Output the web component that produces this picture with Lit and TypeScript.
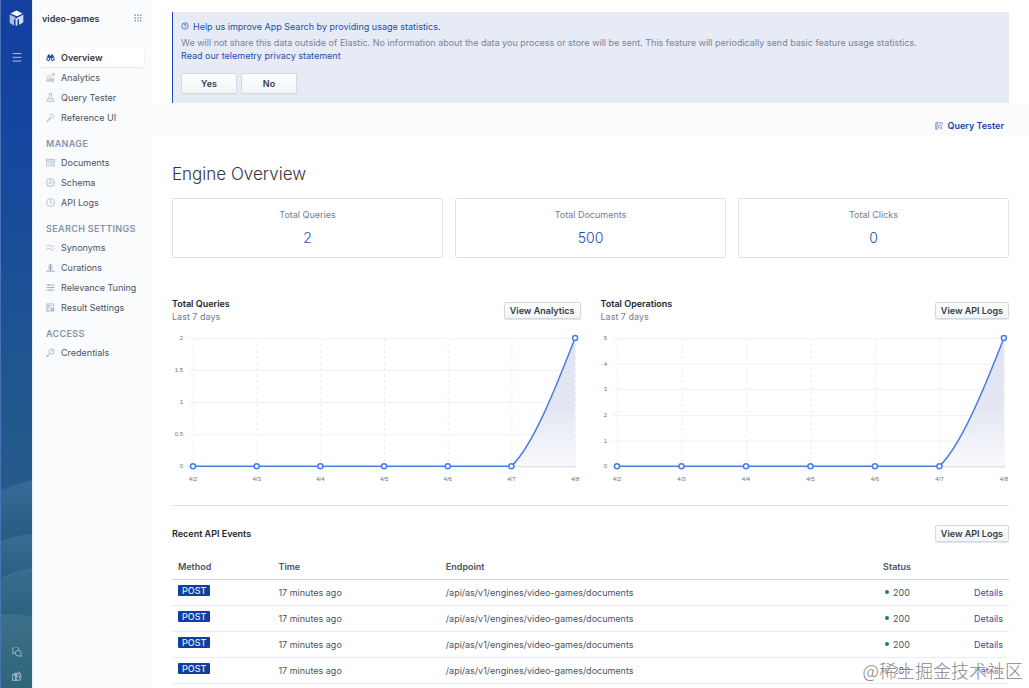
import { LitElement, html, css, svg } from "lit";
import type { SVGTemplateResult } from "lit";
import { customElement, property } from "lit/decorators.js";
import { classMap } from "lit/directives/class-map.js";

const icons: Record<string, SVGTemplateResult> = {
  overview: svg`<g fill="currentColor" stroke="none"><path d="M3.6 2.6h2.6l.9 1.6v4L5.4 8C4 7.400 2.600 7.600 1.500 8.400z"/><path d="M12.400 2.600H9.800l-.9 1.600v4L10.600 8c1.400-.6 2.800-.4 3.900.4z"/><rect x="7" y="5" width="2" height="4"/></g><circle cx="4" cy="10.600" r="2.600" fill="none" stroke-width="1.800"/><circle cx="12" cy="10.600" r="2.600" fill="none" stroke-width="1.800"/>`,
  analytics: svg`<path d="M1 8.500 5 4.500l3 2.500L14 1.500M10.500 1.500H14.500V5.500M1.500 15.500v-4h2v4M5.500 15.500v-6h2v6M9.500 15.500v-5h2v5M13.500 15.500V8"/>`,
  flask: svg`<path d="M5 1h6M6.200 1v5.500L1.800 13.400Q1.200 15 2.800 15h10.400q1.600 0 1-1.600L9.800 6.500V1M4 10.800h8"/>`,
  wand: svg`<path d="M1 14.600 9 6.600l1.200 1.200-8 8zM10 1v3M15 6h-3M14.500 1.500l-2 2M6 2.500l1.600 1.600M13.500 10.500l-1.600-1.600"/>`,
  documents: svg`<path d="M.7 2.500h14.600v11.500H.7zM.7 5.300h14.600M3 8h2M3 11h2M7 8h6M7 11h6"/>`,
  gear: svg`<circle cx="8" cy="8" r="2.300"/><path d="M6.700 1h2.600l.5 2 1.300.6 1.900-1 1.400 1.400-1 1.900.6 1.300 2 .5v1.600l-2 .5-.6 1.300 1 1.900-1.400 1.400-1.900-1-1.300.6-.5 2H6.700l-.5-2-1.300-.6-1.900 1L1.600 13l1-1.900L2 9.800l-1.500-.5V6.700L2 6.200l.6-1.300-1-1.900L3 1.600l1.900 1L6.200 3z"/>`,
  clock: svg`<circle cx="8" cy="8" r="7"/><path d="M8 3.500V8l3.300 1.800"/>`,
  waves: svg`<path d="M1 6.500C3 2.500 5.500 3 8 5s4.500 2 7-1.500M1 12.500c2-4 4.500-3.500 7-1.500s4.500 2 7-1.500"/>`,
  curations: svg`<path d="M8 14.500V2M5.500 4.200 8 1.500l2.500 2.700M4 7h8M4 10.700h8M.5 14.500h15" stroke-width="1.400"/>`,
  sliders: svg`<path d="M1 3.500h14M1 8h14M1 12.500h14M5 2v3M11 6.500v3M7 11v3" stroke-width="1.300"/>`,
  settings: svg`<path d="M7.500 14.500H1.500V1.500h12V7M4 4.500h7M4 7.500h4M3.500 1.500v13"/><circle cx="11.500" cy="11.500" r="2.600" stroke-width="2"/>`,
  key: svg`<circle cx="10" cy="6" r="4.600"/><circle cx="11" cy="5" r="1"/><path d="M6.700 9.300 1.400 14.600M1.200 12.500v2.300h2.500v-2h2"/>`,
  help: svg`<circle cx="8" cy="8" r="6.400" stroke-width="1.300"/><path d="M5.700 6.600Q5.900 4.400 8 4.400t2.300 1.900Q10.300 7.500 8 8.500v1.300M8 11v1.400" stroke-width="1.300"/>`,
  inspect: svg`<path d="M14.500 5V1.500H1.500v13H5M4 1.500v13" stroke-width="1"/><circle cx="9.800" cy="9" r="3.300"/><path d="m12.200 11.500 3 3.500"/>`,
  grid: svg`<g fill="currentColor" stroke="none">${[1, 6.500, 12].map((y) => [1, 6.500, 12].map((x) => svg`<rect x=${x} y=${y} width="3" height="3"/>`))}</g>`,
  menu: svg`<path d="M1 2.500h14M1 8.500h14M1 14.500h14" stroke-width="1.500"/>`,
  chat: svg`<path d="M4.300 9.500 1 10.500l1-3A5 5 0 1 1 11 4.200" stroke-width="1.300"/><path d="M14 12.200 15 15l-3.200-.9A4.600 4.600 0 1 1 14 12.200z" stroke-width="1.300"/>`,
  gift: svg`<path d="M1 6v9h8M1 6l4.500-2.500V15M1 6h4.500" stroke-width="1.300"/><path d="M7 4.500 10.500 1 14 4.500V12q0 3-3.500 3T7 12zM7 8h3.500a1.700 1.700 0 0 1 0 3.400M7 4.500h7" stroke-width="1.300"/>`,
};

const icon = (name: string) =>
  html`<svg class="icon" viewBox="0 0 16 16" aria-hidden="true" fill="none" stroke="currentColor" stroke-width="1">${icons[name]}</svg>`;

@customElement("line-chart")
class LineChart extends LitElement {
  @property({ attribute: false }) ticks: string[] = [];
  @property({ type: Number }) start = 21;
  @property({ type: Number }) step = 64;
  @property() name = "";

  static styles = css`
    :host { display: block; }
    .chart { display: block; width: 100%; overflow: visible; }
    .label { font: 6px "Liberation Sans", Arial, sans-serif; fill: #69707d; }
    .grid { stroke: #f2f3f5; stroke-width: 1; }
    .guide { stroke: #ebecf0; stroke-width: 1; stroke-dasharray: 3 3; }
    .axis { stroke: #d9dbdf; stroke-width: 1; }
    .line { fill: none; stroke: #4c7de0; stroke-width: 1.5; }
    .dot { fill: #fff; stroke: #4c7de0; stroke-width: 1.5; }
  `;

  render() {
    const top = 8;
    const base = 136;
    const days = ["4/2", "4/3", "4/4", "4/5", "4/6", "4/7", "4/8"];
    const xs = days.map((_, i) => this.start + i * this.step);
    const end = xs[6];
    const from = xs[5];
    const rise = `M${from} ${base}C${from + 21} ${base - 20} ${end - 21} ${base - 74} ${end} ${top}`;
    return html`<svg class="chart" viewBox="0 0 408 155" role="img" aria-label=${this.name}>
      <defs>
        <linearGradient id="fill" x1="0" y1="0" x2="0" y2="1">
          <stop offset="0" stop-color="#dfe3f2" />
          <stop offset="0.55" stop-color="#e4e7f3" />
          <stop offset="1" stop-color="#f9f9fc" />
        </linearGradient>
      </defs>
      ${this.ticks.map((t, i) => {
        const y = base - (i * (base - top)) / (this.ticks.length - 1);
        return svg`<line class="grid" x1=${this.start - 5} x2=${end} y1=${y + 0.5} y2=${y + 0.5} />
          <text class="label" x=${this.start - 10} y=${y + 2} text-anchor="end">${t}</text>`;
      })}
      ${xs.map(
        (x, i) => svg`<line class="guide" x1=${x + 0.5} x2=${x + 0.5} y1=${top} y2=${base} />
          <text class="label" x=${x} y="151" text-anchor="middle">${days[i]}</text>`,
      )}
      <path d="${rise}V${base}Z" fill="url(#fill)" />
      <line class="axis" x1=${this.start - 5} x2=${end + 1} y1=${base + 0.5} y2=${base + 0.5} />
      <path class="line" d="M${xs[0]} ${base}H${from} ${rise}" />
      ${xs.map((x, i) => svg`<circle class="dot" cx=${x} cy=${i === 6 ? top : base} r="2.500" />`)}
    </svg>`;
  }
}

interface NavGroup {
  title?: string;
  items: [string, string][];
}

const nav: NavGroup[] = [
  { items: [["overview", "Overview"], ["analytics", "Analytics"], ["flask", "Query Tester"], ["wand", "Reference UI"]] },
  { title: "MANAGE", items: [["documents", "Documents"], ["gear", "Schema"], ["clock", "API Logs"]] },
  {
    title: "SEARCH SETTINGS",
    items: [["waves", "Synonyms"], ["curations", "Curations"], ["sliders", "Relevance Tuning"], ["settings", "Result Settings"]],
  },
  { title: "ACCESS", items: [["key", "Credentials"]] },
];

const stats = [["Total Queries", "2"], ["Total Documents", "500"], ["Total Clicks", "0"]];

const events = Array.from({ length: 4 }, () => ({
  method: "POST",
  time: "17 minutes ago",
  endpoint: "/api/as/v1/engines/video-games/documents",
  status: 200,
}));

@customElement("app-root")
class AppRoot extends LitElement {
  static styles = css`
    :host {
      display: grid;
      grid-template-columns: 32px 120px minmax(0, 1fr);
      min-height: 100vh;
      position: relative;
      background: #fff;
      color: #4b535f;
      font: 9px/13px Inter, sans-serif;
    }
    * { box-sizing: border-box; }
    h1, h2, p, ul { margin: 0; padding: 0; }
    a { color: #1d4db0; text-decoration: none; }
    button { font: 600 9px/13px Inter, sans-serif; color: #343c47; cursor: pointer; }
    .icon { display: block; width: 9px; height: 9px; flex: none; }
    .rail {
      position: relative;
      display: flex;
      flex-direction: column;
      align-items: center;
      padding: 9px 0 7px;
      border-left: 1px solid #4a72b4;
      background: linear-gradient(#133f9f 0, #1646a0 20%, #205590 54%, #275d88 75%, #2d6679 100%);
    }
    .waves { position: absolute; left: 0; bottom: 0; width: 100%; height: 210px; }
    .rail-btn { position: relative; display: block; padding: 0; border: 0; background: none; color: #b9cbe8; }
    .rail-btn .icon { width: 10px; height: 10px; }
    .logo { display: block; width: 15px; height: 18px; }
    .toggle { margin-top: 25px; }
    .foot { margin-top: auto; display: grid; gap: 14px; }
    .foot .rail-btn { color: #b5ced6; }
    .side { background: #f9fbfd; border-left: 1px solid #e4eef2; padding: 11px 8px 0 7px; }
    .engine { display: flex; align-items: center; justify-content: space-between; padding: 0 2px; height: 14px; margin-bottom: 22px; color: #343741; font-weight: 600; }
    .engine .rail-btn { color: #8d99ae; }
    .engine .icon { width: 8px; height: 8px; }
    .list { list-style: none; }
    .item { display: flex; align-items: center; gap: 6px; height: 20px; padding: 0 6px; border-radius: 2px; color: #4b535f; white-space: nowrap; }
    .item .icon { color: #8b9ab3; }
    .item.active { background: #fff; color: #343741; font-weight: 600; box-shadow: 0 1px 2px #dfe4ec; }
    .item.active .icon { color: #1846a8; }
    .group { padding: 11px 6px 2px; font-size: 9px; line-height: 12px; font-weight: 600; letter-spacing: 0.04em; color: #8494ab; white-space: nowrap; }
    .callout { margin: 12px 20px 0; padding: 7px 8px 9px; border-left: 1px solid #1d4db0; background: #e7ebf5; color: #7b8494; }
    .callout-title { display: flex; align-items: center; gap: 4px; height: 14px; margin-bottom: 3px; font-size: 9px; font-weight: 400; color: #1d4db0; }
    .callout-title .icon { width: 8px; height: 8px; }
    .link { display: block; width: max-content; }
    .actions { display: flex; gap: 4px; margin-top: 11px; }
    .actions .btn { width: 56px; height: 21px; }
    .btn { height: 17px; padding: 0 5px; border: 1px solid #d3d9df; border-radius: 2px; background: linear-gradient(#fdfefe, #f2f5f7); box-shadow: 0 1px 1px #dfe3e8; line-height: 13px; white-space: nowrap; }
    .bar { display: flex; justify-content: flex-end; align-items: center; height: 34px; padding: 11px 25px 0 0; background: #fcfcfd; }
    .tester { display: flex; align-items: center; gap: 4px; font-weight: 600; height: 20px; color: #1846a8; }
    .tester .icon { width: 8px; height: 8px; }
    .content { padding: 23px 20px 4px; }
    .title { font-size: 17px; line-height: 28px; font-weight: 300; color: #343741; }
    .stats { display: grid; grid-template-columns: repeat(3, 1fr); gap: 12px; margin-top: 10px; }
    .stat { display: grid; gap: 8px; height: 60px; padding-top: 9px; border: 1px solid #dde3ee; border-radius: 2px; text-align: center; color: #747e8e; align-content: start; }
    .num { font-size: 14px; line-height: 18px; color: #1d4db0; font-weight: 300; }
    .charts { display: grid; grid-template-columns: 1fr 1fr; gap: 20px; margin-top: 39px; padding-bottom: 20px; border-bottom: 1px solid #dfe2ea; }
    .head { display: flex; justify-content: space-between; align-items: center; }
    .charts .head { height: 26px; margin-bottom: 7px; }
    .h2 { font-size: 9px; line-height: 13px; font-weight: 600; color: #23272f; }
    .sub { color: #747e8e; }
    .recent { padding-top: 18px; }
    .recent .head { height: 18px; margin-bottom: 13px; }
    .table { width: 100%; table-layout: fixed; border-collapse: collapse; text-align: left; }
    .table th { height: 24px; padding: 0 6px; font-weight: 600; color: #4b535f; border-bottom: 1px solid #ccd5e0; }
    .table td { height: 26px; padding: 0 6px; border-bottom: 1px solid #e9ecf2; }
    .c-method { width: 12%; }
    .c-time { width: 20%; }
    .c-endpoint { width: 52%; }
    .table .right { text-align: right; }
    .badge { display: block; width: max-content; margin-bottom: 4px; padding: 0 4px; border-radius: 1px; background: #123f9f; color: #dfe8fb; font-weight: 500; line-height: 11px; }
    .status { display: flex; align-items: center; gap: 4px; padding-left: 2px; }
    .status::before { content: ""; width: 4px; height: 4px; border-radius: 50%; background: #27804b; }
    .table .c-status { padding-left: 8px; }
    .mark { position: absolute; right: 6px; bottom: 6px; font: 300 18px/24px "Noto Sans CJK SC", sans-serif; color: #85878c; text-shadow: 1px 0 #fff, -1px 0 #fff, 0 1px #fff; pointer-events: none; white-space: nowrap; }
  `;

  render() {
    return html`
      <header class="rail">
        <svg class="waves" viewBox="0 0 32 210" preserveAspectRatio="none" aria-hidden="true">
          <defs>
            <linearGradient id="w" x1="0" y1="0" x2="0" y2="1">
              <stop offset="0" stop-color="#fff" stop-opacity="0.09" />
              <stop offset="1" stop-color="#fff" stop-opacity="0" />
            </linearGradient>
          </defs>
          <path fill="url(#w)" d="M0 12Q16 6 32 2v52H0z" />
          <path fill="url(#w)" d="M0 63Q16 57 32 56v40H0z" />
          <path fill="url(#w)" d="M0 100Q16 92 32 90v48H0z" />
          <path fill="url(#w)" d="M0 136Q16 136 32 138v72H0z" />
        </svg>
        <a class="rail-btn" href="#" aria-label="Home">
          <svg class="logo" viewBox="0 0 16 18">
            <path fill="#fff" d="M8 1l6.300 3.300L8.500 7 1.700 4.300z" />
            <path fill="#a9bfe6" d="M.7 5.300 7 8.200v2L5.300 11v6L2 15.200Q.7 14.500.7 13z" />
            <path fill="#cfdcf3" d="M15.300 5.300 9.700 8.100Q7 9.500 7 11v6.300l2-.4V11l1.700-1v6.300L14 14.600q1.300-.8 1.300-2z" />
          </svg>
        </a>
        <button class="rail-btn toggle" aria-label="Menu">${icon("menu")}</button>
        <div class="foot">
          <button class="rail-btn" aria-label="Feedback">${icon("chat")}</button>
          <button class="rail-btn" aria-label="What's new">${icon("gift")}</button>
        </div>
      </header>

      <nav class="side">
        <div class="engine">
          <span>video-games</span>
          <button class="rail-btn" aria-label="Engines">${icon("grid")}</button>
        </div>
        ${nav.map(
          (g) => html`
            ${g.title ? html`<h2 class="group">${g.title}</h2>` : ""}
            <ul class="list">
              ${g.items.map(
                ([glyph, label]) => html`<li>
                  <a href="#" class=${classMap({ item: true, active: label === "Overview" })}>${icon(glyph)}<span>${label}</span></a>
                </li>`,
              )}
            </ul>
          `,
        )}
      </nav>

      <main>
        <section class="callout">
          <h2 class="callout-title">${icon("help")}Help us improve App Search by providing usage statistics.</h2>
          <p>We will not share this data outside of Elastic. No information about the data you process or store will be sent. This feature will periodically send basic feature usage statistics.</p>
          <a class="link" href="#">Read our telemetry privacy statement</a>
          <div class="actions">
            <button class="btn">Yes</button>
            <button class="btn">No</button>
          </div>
        </section>
        <div class="bar"><a class="tester" href="#">${icon("inspect")}Query Tester</a></div>

        <div class="content">
          <h1 class="title">Engine Overview</h1>
          <div class="stats">
            ${stats.map(([label, value]) => html`<div class="stat"><span>${label}</span><span class="num">${value}</span></div>`)}
          </div>

          <div class="charts">
            <section>
              <div class="head">
                <div><h2 class="h2">Total Queries</h2><p class="sub">Last 7 days</p></div>
                <button class="btn">View Analytics</button>
              </div>
              <line-chart name="Total queries per day" .ticks=${["0", "0.5", "1", "1.5", "2"]} .start=${21} .step=${63.6}></line-chart>
            </section>
            <section>
              <div class="head">
                <div><h2 class="h2">Total Operations</h2><p class="sub">Last 7 days</p></div>
                <button class="btn">View API Logs</button>
              </div>
              <line-chart name="Total operations per day" .ticks=${["0", "1", "2", "3", "4", "5"]} .start=${16} .step=${64.4}></line-chart>
            </section>
          </div>

          <section class="recent">
            <div class="head">
              <h2 class="h2">Recent API Events</h2>
              <button class="btn">View API Logs</button>
            </div>
            <table class="table">
              <thead>
                <tr>
                  <th class="c-method">Method</th>
                  <th class="c-time">Time</th>
                  <th class="c-endpoint">Endpoint</th>
                  <th class="c-status">Status</th>
                  <th aria-label="Actions"></th>
                </tr>
              </thead>
              <tbody>
                ${events.map(
                  (e) => html`<tr>
                    <td><span class="badge">${e.method}</span></td>
                    <td>${e.time}</td>
                    <td>${e.endpoint}</td>
                    <td class="c-status"><span class="status">${e.status}</span></td>
                    <td class="right"><a href="#">Details</a></td>
                  </tr>`,
                )}
              </tbody>
            </table>
          </section>
        </div>
      </main>
      <div class="mark">@稀土掘金技术社区</div>
    `;
  }
}
